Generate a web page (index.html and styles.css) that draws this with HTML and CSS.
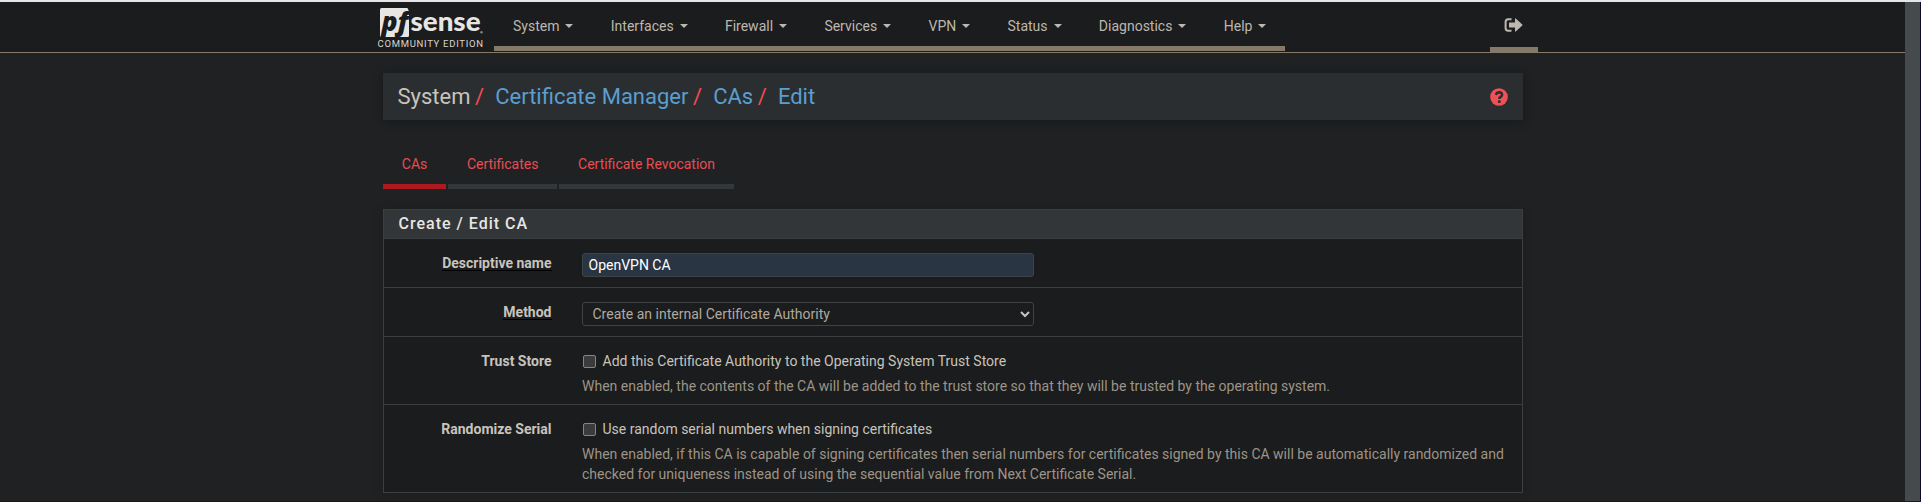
FILE: index.html
```html
<!DOCTYPE html>
<html lang="en">
<head>
<meta charset="utf-8">
<title>System: Certificate Manager: CAs: Edit</title>
<link rel="stylesheet" href="styles.css">
</head>
<body>
<div class="window">
  <div class="page">
    <nav class="navbar">
      <a class="brand">
        <svg width="110" height="48" viewBox="0 0 110 48">
          <path class="mark" d="M4.500 6H30.500L32 9.500V33.500q0 1.500-1.500 1.500h-26Q3 35 3 33.500V7.500Q3 6 4.500 6z"/>
          <text class="pf" x="4.500" y="28.500" textLength="27" lengthAdjust="spacingAndGlyphs">pf</text>
          <text class="sense" x="33.500" y="29.300" textLength="70" lengthAdjust="spacingAndGlyphs">sense</text>
          <circle class="mark dot" cx="104.500" cy="30.300" r="1.300"/>
          <text class="edition" x=".5" y="45" textLength="105.500">COMMUNITY EDITION</text>
        </svg>
      </a>
      <ul class="menu">
        <li>System<i class="caret"></i></li>
        <li>Interfaces<i class="caret"></i></li>
        <li>Firewall<i class="caret"></i></li>
        <li>Services<i class="caret"></i></li>
        <li>VPN<i class="caret"></i></li>
        <li>Status<i class="caret"></i></li>
        <li>Diagnostics<i class="caret"></i></li>
        <li>Help<i class="caret"></i></li>
      </ul>
      <a class="logout">
        <svg width="19" height="14" viewBox="0 0 19 14">
          <path class="door" d="M7.500 1.200H4.200Q1.600 1.200 1.600 4v6q0 2.800 2.600 2.800h3.300"/>
          <path d="M5.500 4.400h5.500V.8q0-.8.700-.3l6.600 6q.5.500 0 1l-6.600 6q-.7.500-.7-.3V9.600H5.500q-.5 0-.5-.5V4.900q0-.5.500-.5z"/>
        </svg>
      </a>
    </nav>
    <main class="container">
      <header class="breadcrumb">
        <ol>
          <li>System</li>
          <li><a>Certificate Manager</a></li>
          <li><a>CAs</a></li>
          <li><a>Edit</a></li>
        </ol>
        <svg class="help-icon" width="18" height="18" viewBox="0 0 18 18">
          <circle cx="9" cy="9" r="8.800"/>
          <path d="M5.800 6.700Q6.900 4.200 9.200 4.200q2.900.1 2.900 2.500 0 1.300-1.500 2.200-1.300.8-1.300 2"/>
          <rect x="7.900" y="12.300" width="2.800" height="2.600" rx="1"/>
        </svg>
      </header>
      <ul class="tabs">
        <li class="active">CAs</li>
        <li>Certificates</li>
        <li>Certificate Revocation</li>
      </ul>
      <form class="panel">
        <h2>Create / Edit CA</h2>
        <div class="row">
          <label class="name"><span class="required">Descriptive name</span></label>
          <div class="field"><input class="control" type="text" value="OpenVPN CA"></div>
        </div>
        <div class="row">
          <label class="name"><span class="required">Method</span></label>
          <div class="field">
            <div class="control select">Create an internal Certificate Authority
              <svg width="10" height="7" viewBox="0 0 10 7"><path d="M1 1l4 4 4-4"/></svg>
            </div>
          </div>
        </div>
        <div class="row check">
          <label class="name">Trust Store</label>
          <div class="field">
            <label class="option"><i class="box"></i>Add this Certificate Authority to the Operating System Trust Store</label>
            <p>When enabled, the contents of the CA will be added to the trust store so that they will be trusted by the operating system.</p>
          </div>
        </div>
        <div class="row check">
          <label class="name">Randomize Serial</label>
          <div class="field">
            <label class="option"><i class="box"></i>Use random serial numbers when signing certificates</label>
            <p>When enabled, if this CA is capable of signing certificates then serial numbers for certificates signed by this CA will be automatically randomized and checked for uniqueness instead of using the sequential value from Next Certificate Serial.</p>
          </div>
        </div>
      </form>
    </main>
  </div>
  <div class="scrollbar"></div>
</div>
</body>
</html>
```
FILE: styles.css
```css
* { box-sizing: border-box; }
body {
  margin: 0;
  background: #202123;
  color: #c8c3bc;
  font: 14px/20px Roboto, sans-serif;
  overflow: hidden;
}
ul, ol { list-style: none; margin: 0; padding: 0; }
.window {
  display: flex;
  height: 502px;
  border-top: 2px solid #e4e6e8;
  border-bottom: 1px solid #1c171b;
}
.page { width: 1905px; }
.scrollbar {
  width: 16px;
  background: #454a4d;
  border-right: 1px solid #0c0a24;
}
.navbar {
  display: flex;
  height: 51px;
  padding-left: 377px;
  background: #1b1c1d;
  border-bottom: 1px solid #857969;
}
.brand { width: 117px; height: 49px; }
.brand svg { display: block; overflow: visible; }
.mark { fill: #e8e6e3; }
.dot { opacity: .5; }
.pf { font: italic 800 27px "Open Sans", sans-serif; fill: #1b1c1d; }
.sense { font: 900 27px Lato, sans-serif; fill: #e8e6e3; }
.edition { font: 9.500px Roboto, sans-serif; fill: #d8d5d0; }
.menu {
  display: flex;
  width: 791px;
  height: 49px;
  border-bottom: 5px solid #857969;
  justify-content: space-between;
  padding: 0 18.500px 0 19px;
}
.menu li { display: flex; align-items: center; height: 48px; color: #bdb7af; }
.caret {
  margin-left: 6px;
  border: 4px solid transparent;
  border-top-color: #bdb7af;
  border-bottom: 0;
}
.logout {
  display: flex;
  justify-content: center;
  width: 48px;
  height: 50px;
  margin-left: 205px;
  padding: 16px 2px 0 0;
  border-bottom: 5px solid #857969;
}
.logout svg { fill: #bdb7af; }
.logout .door { fill: none; stroke: #bdb7af; stroke-width: 2; }
.container { width: 1140px; margin: 20px auto 0 383px; }
.breadcrumb {
  display: flex;
  align-items: center;
  justify-content: space-between;
  height: 47px;
  padding: 0 15.500px 0 14.500px;
  background: #2a2e31;
  box-shadow: 0 1px 10px rgba(0, 0, 0, .3);
}
.breadcrumb ol { display: flex; font-size: 22px; line-height: 30px; }
.breadcrumb li + li::before { content: "/"; color: #f14c52; padding: 0 11px 0 5px; }
.breadcrumb li + li { margin-left: -.4px; }
.breadcrumb a { color: #5a9fcf; }
.help-icon { fill: #f15056; }
.help-icon path { fill: none; stroke: #2a2e31; stroke-width: 2.500; }
.help-icon rect { fill: #2a2e31; }
.tabs { display: flex; gap: 2px; margin-top: 32px; }
.tabs li {
  height: 37px;
  padding: 2px 18.800px 0;
  border-bottom: 5px solid #343739;
  color: #e84d52;
}
.tabs .active { border-color: #ac1a1f; }
.panel {
  margin-top: 20px;
  background: #1b1c1d;
  border: 1px solid #3c3f41;
  height: 284px;
  box-shadow: 0 1px 10px rgba(0, 0, 0, .15);
}
.panel h2 {
  margin: 0;
  height: 28px;
  padding-left: 14.500px;
  background: #323638;
  color: #e8e6e3;
  font-size: 16px;
  font-weight: 500;
  line-height: 27px;
  letter-spacing: 1px;
}
.row { display: flex; border-top: 1px solid #3c3f41; padding-top: 14px; height: 49px; }
.name { width: 167.500px; margin-right: 30.500px; text-align: right; font-weight: 700; }
.required { display: inline-block; height: 18px; line-height: 20px; border-bottom: 1px solid #000; }
.field { width: 930px; }
.control {
  display: flex;
  align-items: center;
  justify-content: space-between;
  width: 452px;
  height: 24px;
  border: 1px solid #3e4446;
  border-radius: 3px;
  padding: 0 5.500px;
  background: #2a3544;
  color: #fff;
  font: 14px Roboto, sans-serif;
}
.select { background: #1b1c1d; color: #b0a99f; padding: 0 3px 0 9.500px; }
.select svg { fill: none; stroke: #c8c3bc; stroke-width: 2; }
.check { height: 68px; }
.check:last-child { height: 88px; }
.option { display: flex; align-items: center; height: 20px; }
.box {
  width: 13px;
  height: 13px;
  margin: 0 6.500px 0 1px;
  border: 1px solid #858585;
  border-radius: 2px;
  background: #3b3b3b;
}
.field p { margin: 5px 0 0; color: #9d9488; }
```
